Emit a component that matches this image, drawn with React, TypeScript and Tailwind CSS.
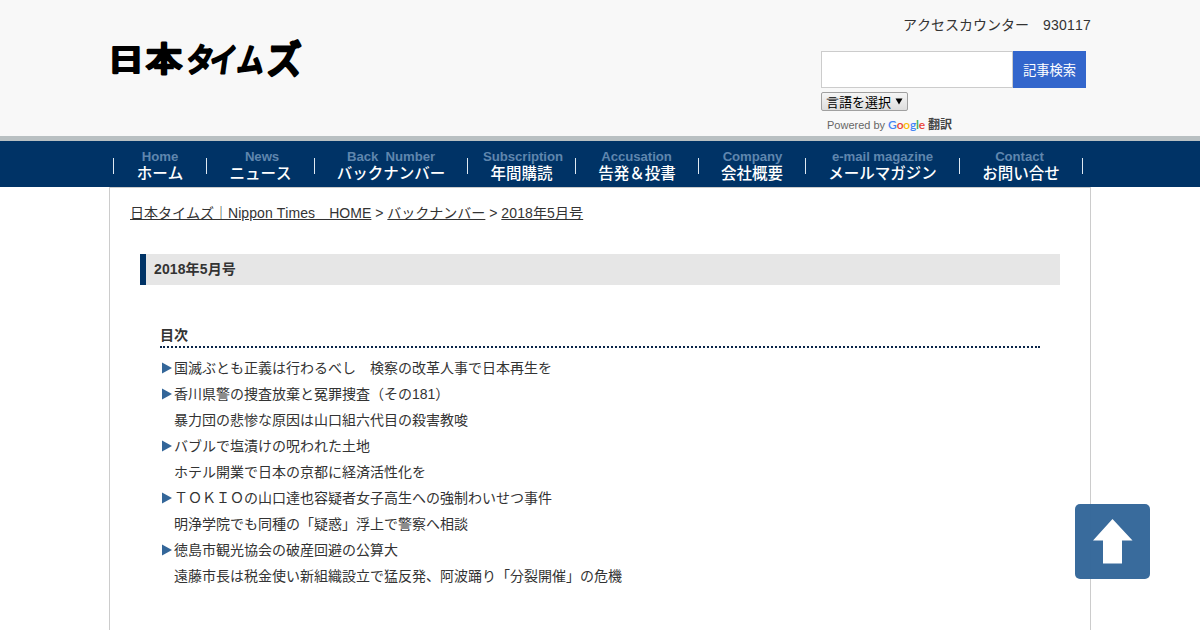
interface NavItem {
    en: string;
    ja: string;
    width: string;
    shift?: string;
}

const navItems: NavItem[] = [
    { en: 'Home', ja: 'ホーム', width: 'w-[93px]' },
    { en: 'News', ja: 'ニュース', width: 'w-[108px]', shift: 'pl-[3px]' },
    { en: 'Back  Number', ja: 'バックナンバー', width: 'w-[153px]' },
    { en: 'Subscription', ja: '年間購読', width: 'w-[108px]', shift: 'pl-[3px]' },
    { en: 'Accusation', ja: '告発＆投書', width: 'w-[123px]', shift: 'pr-px' },
    { en: 'Company', ja: '会社概要', width: 'w-[107px]', shift: 'pl-px' },
    { en: 'e-mail magazine', ja: 'メールマガジン', width: 'w-[154px]' },
    { en: 'Contact', ja: 'お問い合せ', width: 'w-[124px]', shift: 'pr-[3px]' },
];

const articles = [
    { title: '国滅ぶとも正義は行わるべし　検察の改革人事で日本再生を' },
    { title: '香川県警の捜査放棄と冤罪捜査（その181）', sub: '暴力団の悲惨な原因は山口組六代目の殺害教唆' },
    { title: 'バブルで塩漬けの呪われた土地', sub: 'ホテル開業で日本の京都に経済活性化を' },
    { title: 'ＴＯＫＩＯの山口達也容疑者女子高生への強制わいせつ事件', sub: '明浄学院でも同種の「疑惑」浮上で警察へ相談' },
    { title: '徳島市観光協会の破産回避の公算大', sub: '遠藤市長は税金使い新組織設立で猛反発、阿波踊り「分裂開催」の危機' },
];

// Each character is stretched on its own to give the hand-lettered rhythm
const logoGlyphs = [
    { char: '日', transform: 'translate(1.6 41.5) scale(1.22 1)' },
    { char: '本', transform: 'translate(39.8 43) scale(1.22 1.08)' },
    { char: 'タ', transform: 'translate(79 43.5) skewX(-8) scale(0.9 1.1)' },
    { char: 'イ', transform: 'translate(102.5 44) skewX(-8) scale(0.88 1.1)' },
    { char: 'ム', transform: 'translate(130 43.5) skewX(-6) scale(0.9 1.1)' },
    { char: 'ズ', transform: 'translate(160.5 45) scale(1.17 1.26)' },
];

const Logo = () => (
    <svg width="204" height="60" className="block" aria-label="日本タイムズ">
        <g
            fontFamily="'Noto Sans CJK JP', sans-serif"
            fontSize="30"
            fontWeight="500"
            stroke="#000"
            strokeWidth="2.2"
            strokeLinejoin="round"
            strokeLinecap="round"
        >
            {logoGlyphs.map((glyph) => (
                <text key={glyph.char} transform={glyph.transform}>{glyph.char}</text>
            ))}
        </g>
    </svg>
);

const googleLetters = [
    { letter: 'G', color: 'text-[#4285f4]' },
    { letter: 'o', color: 'text-[#ea4335]' },
    { letter: 'o', color: 'text-[#fbbc05]' },
    { letter: 'g', color: 'text-[#4285f4]' },
    { letter: 'l', color: 'text-[#34a853]' },
    { letter: 'e', color: 'text-[#ea4335]' },
];

const Header = () => (
    <header className="h-[136px] bg-[#f8f8f8]">
        <div className="mx-auto w-[988px] flex justify-between pr-1">
            <div className="pt-7">
                <Logo />
            </div>
            <div className="w-[269px]">
                <p className="mt-[15px] h-5 leading-5 text-right -mr-px">
                    アクセスカウンター　<span className="tracking-[0.2px]">930117</span>
                </p>
                <form className="mt-4 flex h-[37px]">
                    <input type="text" className="w-[192px] h-full bg-white border border-[#ccc] rounded-none" />
                    <button
                        type="button"
                        className="w-[73px] h-full pt-1 bg-[#3366cc] text-white text-[13.3px]"
                    >
                        記事検索
                    </button>
                </form>
                <button
                    type="button"
                    className="mt-[4px] flex h-[19px] w-[87px] items-center justify-between rounded-[2px] border border-[#a0a0a0] bg-linear-to-b from-[#f6f6f6] to-[#dddddd] pl-1 pr-[4px] text-[13px] leading-[17px] text-black"
                >
                    <span className="pt-px">言語を選択</span>
                    <svg width="8" height="7" className="mb-px">
                        <path d="M0.5 0.5h7L4 6.5z" fill="#000" />
                    </svg>
                </button>
                <p className="mt-[6px] ml-[6px] flex items-center h-4 text-[11px] text-[#666] whitespace-nowrap">
                    <span className="pt-0.5">Powered by</span>
                    <span className="ml-[3px] text-[12px] leading-4 font-['Lato',sans-serif] font-semibold w-[37px] tracking-[-0.2px]">
                        {googleLetters.map(({ letter, color }, index) => (
                            <span key={index} className={color}>{letter}</span>
                        ))}
                    </span>
                    <span className="ml-[3px] pt-0.5 text-[12px] font-bold text-[#444]">翻訳</span>
                </p>
            </div>
        </div>
    </header>
);

const Nav = () => (
    <nav className="h-[51px] bg-[#003366] border-t-[5px] border-[#b9c0c2]">
        <ul className="mx-auto w-[974px] flex pt-[17px]">
            {navItems.map((item) => (
                <li
                    key={item.en}
                    className={`${item.width} shrink-0 h-4 border-l border-[#dfe9f2] last:border-r`}
                >
                    <a href="#" className="flex flex-col items-center -mt-[9px] whitespace-pre">
                        <span className={`text-[13.2px] leading-4 font-bold text-[#5f86ae] tracking-[-0.05px] ${item.shift ?? ''}`}>
                            {item.en}
                        </span>
                        <span className="-mt-px text-[15.5px] leading-4 font-medium text-white font-['Noto_Sans_CJK_JP',sans-serif]">
                            {item.ja}
                        </span>
                    </a>
                </li>
            ))}
        </ul>
    </nav>
);

const Breadcrumb = () => (
    <p className="pt-[15px] pl-5 leading-5">
        <a href="#" className="underline">
            日本タイムズ｜<span className="tracking-[0.06px]">Nippon Times　HOME</span>
        </a>
        {' > '}
        <a href="#" className="underline">バックナンバー</a>
        {' > '}
        <a href="#" className="underline tracking-[0.12px]">2018年5月号</a>
    </p>
);

const Contents = () => (
    <section className="mx-[50px] mt-10">
        <h3 className="h-[23px] leading-[21px] font-bold border-b-2 border-dotted border-[#0a2549]">目次</h3>
        <ul className="mt-[7px] leading-[26px]">
            {articles.map((article) => (
                <li key={article.title} className="flex">
                    <svg width="14" height="26" className="shrink-0">
                        <path d="M2 7.5l10 5.5-10 5.5z" fill="#336699" />
                    </svg>
                    <div>
                        <p>{article.title}</p>
                        {article.sub && <p>{article.sub}</p>}
                    </div>
                </li>
            ))}
        </ul>
    </section>
);

const App = () => {
    return (
        <div className="h-[630px] overflow-hidden bg-white text-sm text-[#333] [font-kerning:none] font-['Liberation_Sans','Noto_Sans_CJK_JP',sans-serif]">
            <Header />
            <Nav />
            <main className="mx-auto w-[982px] h-[443px] border-x border-t border-[#ccc]">
                <Breadcrumb />
                <h2 className="mt-[31px] mx-[30px] h-[31px] leading-[31px] pl-2 border-l-6 border-[#003366] bg-[#e6e6e6] font-bold tracking-[0.12px]">
                    2018年5月号
                </h2>
                <Contents />
            </main>

            {/* Back to top */}
            <a href="#" className="fixed right-[50px] bottom-[51px] w-[75px] h-[75px] rounded-[5px] bg-[#336699]/97">
                <svg width="75" height="75">
                    <path d="M37.5 15L57.5 36.5H47V59.5H28V36.5H18z" fill="#fff" />
                </svg>
            </a>
        </div>
    );
};

export default App;
